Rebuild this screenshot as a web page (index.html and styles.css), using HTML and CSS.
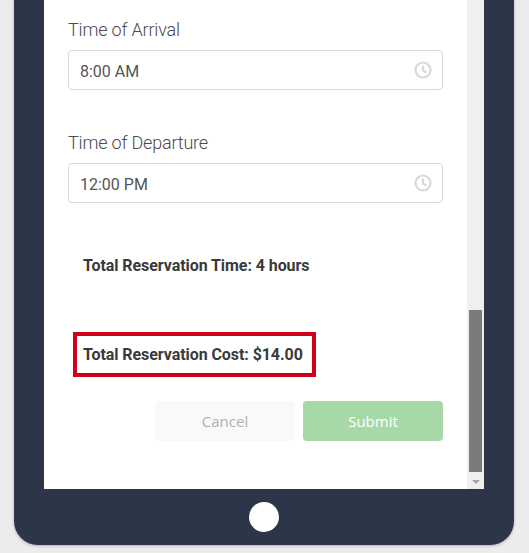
FILE: index.html
```html
<!DOCTYPE html>
<html lang="en">
<head>
    <meta charset="UTF-8">
    <meta name="viewport" content="width=device-width, initial-scale=1.0">
    <title>Reservation</title>
    <link rel="stylesheet" href="styles.css">
</head>
<body>
    <div class="tablet">
        <div class="screen">
            <form class="form">
                <div class="field">
                    <label class="field-label">Time of Arrival</label>
                    <div class="time-input">
                        <span class="time-value">8:00 AM</span>
                        <svg class="clock" viewBox="0 0 18 18" width="18" height="18"><circle cx="9" cy="9" r="7.5"/><path d="M9 4.5V9.5L12.5 11.5"/></svg>
                    </div>
                </div>
                <div class="field">
                    <label class="field-label">Time of Departure</label>
                    <div class="time-input">
                        <span class="time-value">12:00 PM</span>
                        <svg class="clock" viewBox="0 0 18 18" width="18" height="18"><circle cx="9" cy="9" r="7.5"/><path d="M9 4.5V9.5L12.5 11.5"/></svg>
                    </div>
                </div>
                <div class="total-time">Total Reservation Time: 4 hours</div>
                <div class="total-cost">Total Reservation Cost: $14.00</div>
                <div class="buttons">
                    <button type="button" class="btn btn-cancel">Cancel</button>
                    <button type="button" class="btn btn-submit">Submit</button>
                </div>
            </form>
            <div class="scrollbar">
                <div class="scroll-track"><div class="scroll-thumb"></div></div>
                <div class="scroll-arrow"></div>
            </div>
        </div>
        <div class="chin"><div class="home-button"></div></div>
    </div>
</body>
</html>
```

FILE: styles.css
```css
html, body {
    height: 100%;
}

body {
    margin: 0;
    background: #ececec;
    font-family: 'Roboto', sans-serif;
    color: #333;
    overflow: hidden;
}

.tablet {
    width: 440px;
    height: 545px;
    margin-left: 14px;
    padding: 0 30px;
    background: #2d3648;
    border-radius: 0 0 24px 24px;
    box-shadow: 0 1px 3px rgba(0, 0, 0, 0.25);
    display: flex;
    flex-direction: column;
}

.screen {
    height: 489px;
    background: #fff;
    display: flex;
}

.form {
    flex: 1;
    padding: 19px 24px 0;
}

.field {
    margin-bottom: 42px;
}

.field:last-of-type {
    margin-bottom: 0;
}

.field-label {
    display: block;
    font-size: 18px;
    font-weight: 300;
    line-height: 21px;
    letter-spacing: -0.18px;
    margin-bottom: 10px;
    color: #4a4a4a;
}

.time-input {
    height: 38px;
    border: 1px solid #d9d9d9;
    border-radius: 4px;
    padding: 0 10px 0 11px;
    display: flex;
    align-items: center;
    justify-content: space-between;
    font-size: 16px;
    color: #555;
}

.time-value {
    padding-top: 2px;
}

.clock {
    fill: none;
    stroke: #d9d9d9;
    stroke-width: 2.2;
}

.total-time, .total-cost {
    font-size: 16px;
    font-weight: 700;
    line-height: 19px;
    letter-spacing: -0.07px;
    color: #3a3a3a;
}

.total-time {
    margin: 53px 0 0 15px;
}

.total-cost {
    width: 243px;
    height: 45px;
    box-sizing: border-box;
    border: 4px solid #d0021b;
    margin: 57px 0 0 5px;
    padding: 9px 0 0 6px;
}

.buttons {
    display: flex;
    justify-content: flex-end;
    gap: 8px;
    margin-top: 24px;
}

.btn {
    width: 140px;
    height: 40px;
    border: none;
    border-radius: 4px;
    font-family: 'Open Sans', sans-serif;
    font-size: 15px;
}

.btn-cancel {
    background: #f9f9f9;
    color: #b0b0b0;
}

.btn-submit {
    background: #a6d8a8;
    color: #fff;
    font-weight: 500;
}

.scrollbar {
    width: 17px;
    background: #efefef;
    display: flex;
    flex-direction: column;
}

.scroll-track {
    flex: 1;
    padding: 310px 2px 0;
}

.scroll-thumb {
    height: 162px;
    background: #7b7b7b;
}

.scroll-arrow {
    width: 0;
    height: 0;
    margin: 0 auto 5px;
    border-left: 4px solid transparent;
    border-right: 4px solid transparent;
    border-top: 4px solid #a3a3a3;
}

.chin {
    flex: 1;
    display: flex;
    align-items: center;
    justify-content: center;
}

.home-button {
    width: 30px;
    height: 30px;
    border-radius: 50%;
    background: #fff;
}
```
